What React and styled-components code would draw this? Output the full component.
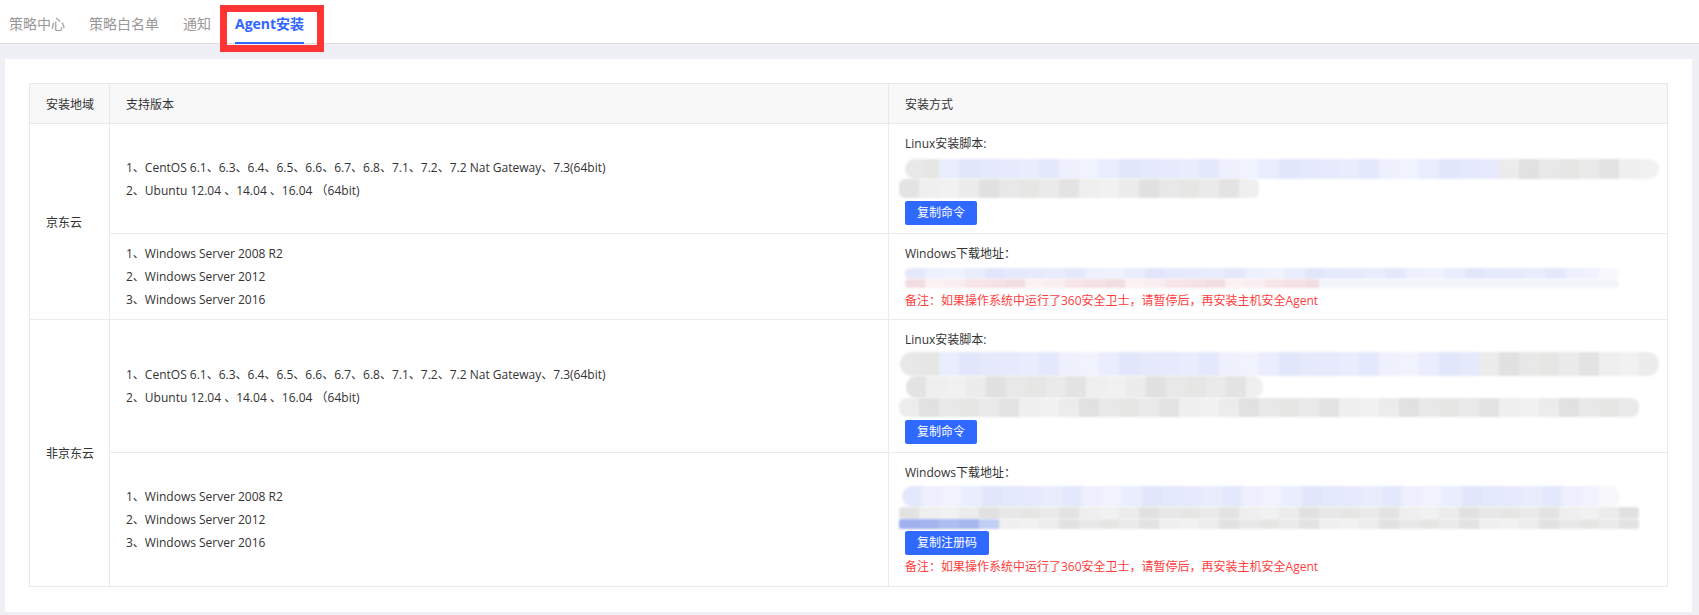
import React from 'react';
import styled, { createGlobalStyle } from 'styled-components';

const GlobalStyle = createGlobalStyle`
  html, body {
    margin: 0;
    padding: 0;
    background: #eff0f5;
  }
  body {
    font-family: "Open Sans", "Noto Sans CJK SC", sans-serif;
    font-size: 12px;
    color: #333;
  }
`;

const Page = styled.div`
  min-height: 100vh;
  display: flex;
  flex-direction: column;
`;

const TabBar = styled.div`
  display: flex;
  gap: 24px;
  height: 44px;
  box-sizing: border-box;
  padding-left: 9px;
  background: #fff;
  border-bottom: 1px solid #dcdde1;
`;

const Tab = styled.div`
  position: relative;
  display: flex;
  align-items: center;
  box-sizing: border-box;
  height: 44px;
  padding-top: 4px;
  font-size: 14px;
  color: ${({ $active }) => ($active ? '#3066ff' : '#999')};
  font-weight: ${({ $active }) => ($active ? 700 : 400)};
  border-bottom: 2px solid ${({ $active }) => ($active ? '#3066ff' : 'transparent')};
`;

const Highlight = styled.div`
  position: absolute;
  left: -15px;
  right: -20px;
  top: 5px;
  height: 47px;
  box-sizing: border-box;
  border: 7px solid #ff3434;
  z-index: 2;
`;

const Content = styled.div`
  flex: 1;
  padding: 15px 7px 5px 5px;
`;

const Card = styled.div`
  background: #fff;
  padding: 24px 24px 25px;
`;

const Table = styled.table`
  width: 100%;
  border-collapse: collapse;
  table-layout: fixed;
  border: 1px solid #e8e8e8;
`;

const Th = styled.th`
  height: 39px;
  padding: 0 16px;
  text-align: left;
  font-weight: 400;
  white-space: nowrap;
  background: #f8f8f8;
  border: 1px solid #e8e8e8;
`;

const RegionCell = styled.td`
  padding: 0 16px;
  vertical-align: middle;
  white-space: nowrap;
  border: 1px solid #ebebeb;
`;

const VersionCell = styled.td`
  padding: 0 16px;
  vertical-align: middle;
  border: 1px solid #ebebeb;
`;

const VersionLine = styled.div`
  line-height: 23px;
  white-space: nowrap;
`;

const InstallCell = styled.td`
  padding: 11px 16px ${({ $pb }) => $pb}px;
  vertical-align: top;
  border: 1px solid #ebebeb;
`;

const Label = styled.div`
  line-height: 18px;
`;

const Blur = styled.div`
  margin-top: ${({ $mt }) => $mt}px;
  display: flex;
  flex-direction: column;
`;

const BlurRow = styled.div`
  display: flex;
  height: ${({ $h }) => $h}px;
  margin-left: ${({ $x }) => $x}px;
  border-radius: ${({ $r }) => $r}px;
  overflow: hidden;
  filter: blur(1.2px);
  align-self: flex-start;
`;

const Px = styled.div`
  flex: none;
  height: 100%;
`;

const Button = styled.button`
  display: block;
  margin-top: ${({ $mt }) => $mt}px;
  height: 24px;
  padding: 0 12px;
  border: none;
  border-radius: 2px;
  background: #3069ff;
  color: #fff;
  font-family: inherit;
  font-size: 12px;
  line-height: 24px;
  cursor: pointer;
`;

const Note = styled.div`
  margin-top: ${({ $mt }) => $mt}px;
  line-height: 18px;
  color: #ff3d3d;
`;

const BLUE = ['#e4e8fc', '#eaedfd', '#e7eafc', '#eef0fe', '#e2e6fb', '#e9ecfd', '#f0f2fe', '#e5e9fc'];
const GRAY = ['#e8e8e8', '#e3e3e3', '#ececec', '#e6e6e4', '#efefef', '#e1e1e1', '#eaeaea', '#f1f1f1'];
const PINK = ['#f7e4e8', '#f2dde2', '#f9edf0', '#f5e1e6', '#fbf0f2'];
const PALE = ['#f6f6fb', '#f8f8fc', '#f3f4fa'];
const DEEP = ['#aebdf1', '#a3b4ef', '#9fb1ee', '#a7b7f0'];

const cells = (parts, seed) => {
  const out = [];
  parts.forEach(([w, colors], pi) => {
    let left = w;
    let i = 0;
    while (left > 0) {
      const cw = Math.min(20, left);
      out.push({ w: cw, c: colors[(i * 3 + seed + pi) % colors.length] });
      left -= cw;
      i += 1;
    }
  });
  return out;
};

const blurs = {
  linuxJd: [
    { x: 0, h: 20, r: 10, parts: [[34, GRAY], [560, BLUE], [160, GRAY]] },
    { x: -6, h: 19, r: 6, parts: [[360, GRAY]] },
  ],
  winJd: [
    { x: 0, h: 11, r: 6, parts: [[694, BLUE], [20, PALE]] },
    { x: 0, h: 9, r: 4, parts: [[414, PINK], [300, PALE]] },
  ],
  linuxOther: [
    { x: -5, h: 24, r: 12, parts: [[39, GRAY], [540, BLUE], [180, GRAY]] },
    { x: 1, h: 22, r: 10, parts: [[357, GRAY]] },
    { x: -6, h: 19, r: 8, parts: [[740, GRAY]] },
  ],
  winOther: [
    { x: -3, h: 21, r: 10, parts: [[697, BLUE], [21, PALE]] },
    { x: -6, h: 12, r: 4, parts: [[740, GRAY]] },
    { x: -6, h: 10, r: 2, parts: [[80, DEEP], [20, ['#c2cff5']], [640, GRAY]] },
  ],
};

const Blurred = ({ rows, mt }) => (
  <Blur $mt={mt}>
    {rows.map((row, ri) => (
      <BlurRow key={ri} $x={row.x} $h={row.h} $r={row.r}>
        {cells(row.parts, ri).map((cell, ci) => (
          <Px key={ci} style={{ width: cell.w, background: cell.c }} />
        ))}
      </BlurRow>
    ))}
  </Blur>
);

const linuxVersions = [
  '1、CentOS 6.1、6.3、6.4、6.5、6.6、6.7、6.8、7.1、7.2、7.2 Nat Gateway、7.3(64bit)',
  '2、Ubuntu 12.04 、14.04 、16.04 （64bit)',
];

const windowsVersions = [
  '1、Windows Server 2008 R2',
  '2、Windows Server 2012',
  '3、Windows Server 2016',
];

const NOTE = '备注：如果操作系统中运行了360安全卫士，请暂停后，再安装主机安全Agent';

const Versions = ({ lines }) => (
  <VersionCell>
    {lines.map((line) => (
      <VersionLine key={line}>{line}</VersionLine>
    ))}
  </VersionCell>
);

const tabs = ['策略中心', '策略白名单', '通知', 'Agent安装'];

export default function App() {
  return (
    <Page>
      <GlobalStyle />
      <TabBar>
        {tabs.map((t) => (
          <Tab key={t} $active={t === 'Agent安装'}>
            {t}
            {t === 'Agent安装' && <Highlight />}
          </Tab>
        ))}
      </TabBar>
      <Content>
        <Card>
          <Table>
            <colgroup>
              <col style={{ width: 80 }} />
              <col />
              <col />
            </colgroup>
            <thead>
              <tr>
                <Th>安装地域</Th>
                <Th>支持版本</Th>
                <Th>安装方式</Th>
              </tr>
            </thead>
            <tbody>
              <tr>
                <RegionCell rowSpan={2}>京东云</RegionCell>
                <Versions lines={linuxVersions} />
                <InstallCell $pb={8}>
                  <Label>Linux安装脚本:</Label>
                  <Blurred rows={blurs.linuxJd} mt={6} />
                  <Button $mt={3}>复制命令</Button>
                </InstallCell>
              </tr>
              <tr>
                <Versions lines={windowsVersions} />
                <InstallCell $pb={9}>
                  <Label>Windows下载地址：</Label>
                  <Blurred rows={blurs.winJd} mt={5} />
                  <Note $mt={4}>{NOTE}</Note>
                </InstallCell>
              </tr>
              <tr>
                <RegionCell rowSpan={2}>非京东云</RegionCell>
                <Versions lines={linuxVersions} />
                <InstallCell $pb={8}>
                  <Label>Linux安装脚本:</Label>
                  <Blurred rows={blurs.linuxOther} mt={3} />
                  <Button $mt={3}>复制命令</Button>
                </InstallCell>
              </tr>
              <tr>
                <Versions lines={windowsVersions} />
                <InstallCell $pb={10}>
                  <Label>Windows下载地址：</Label>
                  <Blurred rows={blurs.winOther} mt={4} />
                  <Button $mt={2}>复制注册码</Button>
                  <Note $mt={3}>{NOTE}</Note>
                </InstallCell>
              </tr>
            </tbody>
          </Table>
        </Card>
      </Content>
    </Page>
  );
}
